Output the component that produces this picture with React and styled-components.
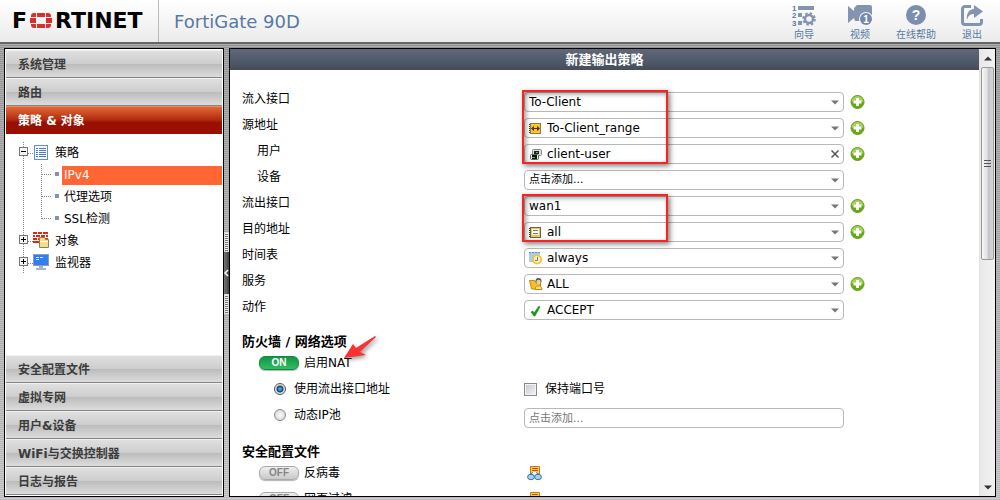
import React, { useState } from "react";
import styled, { createGlobalStyle } from "styled-components";

const GlobalStyle = createGlobalStyle`
  * {
    box-sizing: border-box;
  }

  body {
    margin: 0;
    overflow: hidden;
    font-family: "DejaVu Sans", "Noto Sans CJK SC", sans-serif;
    font-size: 12px;
    line-height: 14px;
    color: #000;
  }

  button, input, select {
    font: inherit;
    color: inherit;
  }
`;

/* ---------- Page ---------- */
const Page = styled.div`
  display: flex;
  flex-direction: column;
  height: 100vh;
  background:
    repeating-linear-gradient(rgba(255, 255, 255, 0.16) 0 1px, rgba(0, 0, 0, 0.06) 1px 2px),
    linear-gradient(#989898, #c6c4c6);
`;

const Header = styled.header`
  display: flex;
  align-items: stretch;
  flex-shrink: 0;
  height: 44px;
  background: linear-gradient(#fff, #ebebeb);
  border-bottom: 2px solid #666;
`;

const Brand = styled.a`
  display: flex;
  align-items: center;
  gap: 3px;
  width: 159px;
  padding-left: 12px;
  border-right: 1px solid #bbb;
  color: #000;
  font-size: 22px;
  font-weight: 700;
  text-decoration: none;
`;

const Product = styled.h1`
  flex: 1;
  margin: 0;
  padding-left: 15px;
  font-size: 18px;
  font-weight: 400;
  line-height: 44px;
  color: #5879a6;
`;

const Tools = styled.nav`
  display: flex;
`;

const ToolButton = styled.button`
  display: flex;
  flex-direction: column;
  align-items: center;
  width: 56px;
  padding: 5px 0 0;
  border: none;
  background: none;
  color: #5879a6;
  font-size: 10px;
  line-height: 12px;
  cursor: pointer;
`;

const Workspace = styled.div`
  display: flex;
  flex: 1;
  min-height: 0;
  padding: 4px 4px 3px;
`;

/* ---------- Sidebar ---------- */
const Sidebar = styled.aside`
  display: flex;
  flex-direction: column;
  flex: 0 0 220px;
  padding: 1px;
  border: 1px solid #000;
  background: #fff;
`;

const MenuItem = styled.button`
  height: 28px;
  flex-shrink: 0;
  padding: 2px 12px 0;
  border: none;
  border-top: 1px solid ${(p) => (p.$active ? "#ee8c60" : "#f0f0f0")};
  border-bottom: 1px solid ${(p) => (p.$active ? "#9a1000" : "#858585")};
  background: ${(p) =>
    p.$active
      ? "linear-gradient(#e2683a, #b02a0c 50%, #980e00 60%, #9a1000)"
      : "linear-gradient(#dfdfdf, #cdcdcd 50%, #bcbcbc 51%, #dcdcdc)"};
  color: ${(p) => (p.$active ? "#fff" : "#3c3c3c")};
  font-weight: 700;
  text-align: left;
  cursor: pointer;
`;

const Tree = styled.ul`
  flex: 1;
  min-height: 0;
  margin: 0;
  padding: 8px 0 0 12px;
  overflow: hidden;
  list-style: none;
`;

const Branch = styled.ul`
  margin: 0 0 0 23px;
  padding: 0;
  list-style: none;
`;

const TreeNode = styled.a`
  display: flex;
  align-items: center;
  height: 22px;
  color: #000;
  text-decoration: none;

  svg {
    flex-shrink: 0;
  }

  span {
    padding-left: 4px;
  }
`;

const Leaf = styled(TreeNode)`
  span {
    flex: 1;
    padding-left: 2px;
    line-height: 19px;
    background: ${(p) => (p.$active ? "#ff6633" : "none")};
    color: ${(p) => (p.$active ? "#fff" : "#000")};
  }
`;

/* ---------- Splitter ---------- */
const Splitter = styled.div`
  display: flex;
  flex-direction: column;
  justify-content: center;
  flex: 0 0 5px;
`;

const Grip = styled.div`
  height: 20px;
  border: 1px solid #ddd;
  background: repeating-linear-gradient(#eee 0 1px, #777 1px 2px);
`;

const Collapse = styled.button`
  display: flex;
  align-items: center;
  height: 42px;
  padding: 0;
  border: none;
  background: linear-gradient(90deg, #777, #444);
  cursor: pointer;
`;

/* ---------- Main ---------- */
const Main = styled.main`
  display: flex;
  flex: 1;
  min-width: 0;
  border: 1px solid #000;
  background: #fff;
`;

const Content = styled.div`
  flex: 1;
  min-width: 0;
  overflow: hidden;
`;

const TitleBar = styled.h2`
  margin: 0;
  background: linear-gradient(#5f697b, #454d5c);
  color: #fff;
  font-size: 13px;
  line-height: 21px;
  text-align: center;
`;

const Form = styled.form`
  padding: 22px 12px 0;
`;

const Fields = styled.div`
  display: grid;
  gap: 6px;
`;

const Row = styled.div`
  display: grid;
  grid-template-columns: 282px 1fr;
  align-items: start;
`;

const Label = styled.label`
  padding-left: ${(p) => (p.$nested ? "15px" : "0")};
`;

const Control = styled.div`
  position: relative;
  display: flex;
  align-items: center;
  gap: 6px;
`;

const Box = styled.div`
  position: relative;
  display: flex;
  align-items: center;
  gap: 4px;
  width: 320px;
  height: 20px;
  padding: 0 4px;
  border: 1px solid #b8b8b8;
  border-radius: 4px;
  background: #fff;

  > svg {
    flex-shrink: 0;
  }
`;

const Select = styled.select`
  flex: 1;
  min-width: 0;
  height: 18px;
  padding: 0;
  border: none;
  outline: none;
  appearance: none;
  background: transparent;
  font-size: ${(p) => (p.$hint ? "11px" : "12px")};
`;

const TextInput = styled.input`
  flex: 1;
  min-width: 0;
  height: 18px;
  padding: 0;
  border: none;
  outline: none;
  background: transparent;

  &::placeholder {
    color: #777;
    font-size: 11px;
  }
`;

const IconButton = styled.button`
  display: flex;
  padding: 0;
  border: none;
  background: none;
  cursor: pointer;
`;

const Callout = styled.div`
  position: absolute;
  z-index: 1;
  top: -2px;
  left: -2px;
  width: 146px;
  height: ${(p) => p.$height};
  border: 2px solid #fa2222;
  box-shadow: 2px 2px 5px rgba(0, 0, 0, 0.5), inset 2px 2px 5px rgba(0, 0, 0, 0.4);
  pointer-events: none;
`;

const SectionTitle = styled.h3`
  margin: 14px 0 0;
  font-size: 13px;
  line-height: 16px;
`;

const Options = styled.div`
  padding-bottom: 2px;
`;

const OptionRow = styled(Row)`
  height: 26px;
  align-items: center;

  ${Box} {
    align-self: end;
  }
`;

const Option = styled.div`
  position: relative;
  display: flex;
  align-items: center;
  gap: ${(p) => (p.$tight ? "5px" : "8px")};
  padding-left: ${(p) => p.$indent || "0"};
`;

const Toggle = styled.button`
  width: 40px;
  height: 14px;
  padding: 0;
  border: 1px solid ${(p) => (p.$on ? "#158a3e" : "#aaa")};
  border-radius: 6px;
  background: ${(p) =>
    p.$on ? "linear-gradient(#159445, #32bd64)" : "linear-gradient(#eee, #c9c9c9)"};
  box-shadow: 0 1px 1px rgba(0, 0, 0, 0.3);
  color: ${(p) => (p.$on ? "#fff" : "#858585")};
  font-family: "Liberation Sans", sans-serif;
  font-size: 10px;
  font-weight: 700;
  line-height: 12px;
  cursor: pointer;
`;

const Radio = styled.input`
  width: 12px;
  height: 12px;
  margin: 0;
  appearance: none;
  border: 1px solid #8a8a8a;
  border-radius: 50%;
  background: radial-gradient(#fff, #ccc);

  &:checked {
    border-color: #555;
    background: radial-gradient(#3aa7dd 0 1px, #123c64 3px, #dfe5ea 4px);
  }
`;

const Checkbox = styled.input`
  width: 13px;
  height: 13px;
  margin: 0;
  appearance: none;
  border: 1px solid #8a8a8a;
  background: linear-gradient(135deg, #c4c8cf, #f4f4f4);
  box-shadow: inset 0 0 0 1px #f4f4f4;

  &:checked {
    background: #3a6ea5;
  }
`;

const Pointer = styled.svg`
  position: absolute;
  top: -22px;
  left: 101px;
  filter: drop-shadow(2px 2px 2px rgba(0, 0, 0, 0.4));
  pointer-events: none;
`;

/* ---------- Scrollbar ---------- */
const ScrollTrack = styled.div`
  display: flex;
  flex-direction: column;
  flex: 0 0 16px;
  padding: 0 1px;
  border-left: 1px solid #e4e4e4;
  background: linear-gradient(90deg, #e8e8e8, #f2f2f2);
`;

const ScrollArrow = styled.button`
  display: flex;
  align-items: center;
  justify-content: center;
  height: 18px;
  padding: 0;
  border: none;
  background: none;
`;

const ScrollRail = styled.div`
  flex: 1;
`;

const ScrollThumb = styled.div`
  display: flex;
  align-items: center;
  justify-content: center;
  height: 47%;
  border: 1px solid #999;
  border-radius: 2px;
  background: linear-gradient(90deg, #f6f6f6, #e3e3e5 45%, #c3c3c9 60%, #d8d8dc);
`;

/* ---------- Icons ---------- */
const LogoMark = () => (
  <svg width="22" height="16" viewBox="0 0 22 16" fill="#da2f2c" aria-hidden="true">
    <path d="M1 4V3a3 3 0 0 1 3-3h2v4zM7 0h8v4H7zM16 0h2a3 3 0 0 1 3 3v1h-5zM0 5h6v5H0zM16 5h6v5h-6zM1 11h5v4H4a3 3 0 0 1-3-3zM7 11h8v4H7zM16 11h5v1a3 3 0 0 1-3 3h-2z" />
  </svg>
);

const WizardIcon = () => (
  <svg width="26" height="24" viewBox="0 0 26 24" fill="#8494b0" aria-hidden="true">
    <g fontFamily="Liberation Sans" fontSize="8" fontWeight="700" fill="#6078a0">
      <text x="1" y="6">1</text>
      <text x="1" y="13">2</text>
      <text x="1" y="21">3</text>
    </g>
    <path d="M7 1h16v4H7zM7 8h4v4H7zM7 16h4v4H7z" />
    <circle cx="18" cy="14" r="4" fill="none" stroke="#8494b0" strokeWidth="2.500" />
    <circle cx="18" cy="14" r="5.800" fill="none" stroke="#8494b0" strokeWidth="2" strokeDasharray="2.400 2.155" />
  </svg>
);

const VideoIcon = () => (
  <svg width="26" height="24" viewBox="0 0 26 24" aria-hidden="true">
    <path d="M1 1l6 5V3l3-3h13a2 2 0 0 1 2 2v10L12 16H8l-1-3-6 5z" fill="#8494b0" />
    <circle cx="19" cy="14" r="7" fill="#f8f8f8" />
    <circle cx="19" cy="14" r="6" fill="#7488aa" />
    <text x="19" y="18" textAnchor="middle" fontFamily="Liberation Sans" fontSize="10" fontWeight="700" fill="#fff">1</text>
  </svg>
);

const HelpIcon = () => (
  <svg width="26" height="24" viewBox="0 0 26 24" aria-hidden="true">
    <circle cx="13" cy="10" r="10" fill="#7d8dac" />
    <text x="13" y="15" textAnchor="middle" fontFamily="Liberation Sans" fontSize="14" fontWeight="700" fill="#fff">?</text>
  </svg>
);

const ExitIcon = () => (
  <svg width="26" height="24" viewBox="0 0 26 24" fill="none" aria-hidden="true">
    <path d="M12 1.500H6A2.500 2.500 0 0 0 3.500 4v13A2.500 2.500 0 0 0 6 19.500h14a2.500 2.500 0 0 0 2.500-2.500v-3" stroke="#8494b0" strokeWidth="3" />
    <path d="M15 0l9 6.500-9 6.500V9c-4 0-6 2-7 6-1-6 2-11 7-11z" fill="#8494b0" />
  </svg>
);

const Expander = ({ open }) => (
  <svg width="15" height="22" viewBox="0 0 15 22" aria-hidden="true">
    <path d="M5.500 0v22M10 11.500h5" stroke="#888" strokeDasharray="1 1" />
    <rect x="1.500" y="5.500" width="8" height="8" fill="#f4f4f4" stroke="#777" />
    <path d={open ? "M3 9.500h5" : "M3 9.500h5M5.500 7v5"} stroke="#000" />
  </svg>
);

/* carries the outer dotted line past the child rows too */
const LeafLines = ({ last }) => (
  <svg width="21" height="22" viewBox="0 0 21 22" overflow="visible" aria-hidden="true">
    <path d="M-17.500 0v22" stroke="#888" strokeDasharray="1 1" />
    <path d={last ? "M.5 0v11M1 10.500h9" : "M.5 0v22M1 10.500h9"} stroke="#888" strokeDasharray="1 1" fill="none" />
    <path d="M14 8h4v4h-4z" fill="#8494b0" />
  </svg>
);

const PolicyIcon = () => (
  <svg width="18" height="18" viewBox="0 0 18 18" aria-hidden="true">
    <rect x="1.500" y="1.500" width="13" height="14" fill="#f4f9ff" stroke="#5f8fd8" />
    <path d="M3 4.500h2M6 4.500h7M3 6.500h2M6 6.500h7M3 8.500h2M6 8.500h7M3 10.500h2M6 10.500h7M3 12.500h2M6 12.500h7" stroke="#4f78c4" />
  </svg>
);

const ObjectIcon = () => (
  <svg width="18" height="18" viewBox="0 0 18 18" aria-hidden="true">
    <path d="M0 0h15v11H0z" fill="#e32414" />
    <path d="M0 2.500h15M0 5.500h15M0 8.500h15M4.500 0v2M9.500 0v2M2.500 3v2M7.500 3v2M12.500 3v2M4.500 6v2" stroke="#fff" />
    <path d="M6.500 5.500h5l1 2h3v8h-9z" fill="#f5df86" stroke="#8f7f50" />
    <path d="M7 9h8v1H7z" fill="#fffbe6" />
  </svg>
);

const MonitorIcon = () => (
  <svg width="18" height="18" viewBox="0 0 18 18" aria-hidden="true">
    <rect x=".5" y=".5" width="15" height="11" fill="#2f7ff0" stroke="#8d9cba" />
    <path d="M3 3.500h3M7 3.500h3M3 5.500h3" stroke="#cfe6ff" />
    <path d="M6 12h4v2h3v2H3v-2h3z" fill="#a9b3c6" />
  </svg>
);

const RangeIcon = () => (
  <svg width="14" height="14" viewBox="0 0 14 14" aria-hidden="true">
    <rect x="1.500" y="2.500" width="10" height="10" fill="#ffc629" stroke="#8a7a50" />
    <path d="M.5 3v10" stroke="#333" strokeDasharray="1 1" />
    <path d="M2 7.500l3-2.500v2h3V5l3 2.500L8 10V8H5v2z" fill="#4b3512" />
  </svg>
);

const UserIcon = () => (
  <svg width="14" height="14" viewBox="0 0 14 14" aria-hidden="true">
    <rect x="3.500" y="2.500" width="9" height="6" rx="1" fill="#ddd" stroke="#888" />
    <path d="M5 4h5v3H5z" fill="#222" />
    <rect x="1.500" y="7.500" width="8" height="5" rx="1" fill="#eee" stroke="#666" />
    <path d="M3 8h5v4H3z" fill="#111" />
    <path d="M3 10.500h3M7 5.500h2" stroke="#35d435" />
  </svg>
);

const AddressIcon = () => (
  <svg width="14" height="14" viewBox="0 0 14 14" aria-hidden="true">
    <rect x="1.500" y="2.500" width="10" height="10" fill="#e9c65a" stroke="#6f6444" />
    <path d="M.5 3v10" stroke="#333" strokeDasharray="1 1" />
    <path d="M3 4h7v6H3z" fill="#fffbea" />
    <path d="M4 5.500h5M4 8.500h5" stroke="#777" />
  </svg>
);

const ScheduleIcon = () => (
  <svg width="14" height="14" viewBox="0 0 14 14" aria-hidden="true">
    <path d="M0 1h11v10H0z" fill="#a9cdee" />
    <path d="M0 1.500h11" stroke="#5b8fbf" strokeDasharray="2 1" />
    <circle cx="8" cy="8.500" r="5" fill="#fbc02e" />
    <circle cx="8" cy="8.500" r="3.200" fill="#fff3cc" />
    <path d="M8.500 6v3.500H6" stroke="#777" fill="none" />
  </svg>
);

const ServiceIcon = () => (
  <svg width="14" height="14" viewBox="0 0 14 14" aria-hidden="true">
    <path d="M.5 3.500h5l1 1.500h5v7h-9z" fill="#f6bd2e" stroke="#c58a10" />
    <circle cx="9.500" cy="4" r="3" fill="#555" />
    <circle cx="9.500" cy="5" r="2.200" fill="#f3cf9a" />
    <path d="M6 12.500c0-5 7-5 7 0z" fill="#ffe07a" stroke="#c58a10" />
  </svg>
);

const AcceptIcon = () => (
  <svg width="14" height="14" viewBox="0 0 14 14" aria-hidden="true">
    <path d="M2 9l2-1 1 2 5-7 1 1-5 9H5z" fill="#169a16" stroke="#0d800d" strokeWidth=".5" />
  </svg>
);

const PlusIcon = () => (
  <svg width="15" height="15" viewBox="0 0 15 15" aria-hidden="true">
    <circle cx="7.500" cy="7" r="6.500" fill="#68ab10" stroke="#5f9d18" />
    <path d="M1.500 7a6 6 0 0 1 12 0c-4-2-8-2-12 0z" fill="#a3d356" />
    <path d="M7.500 3v8M3.500 7h8" stroke="#fff" strokeWidth="3" />
  </svg>
);

const Arrow = ({ up, color = "#777" }) => (
  <svg width="8" height="5" viewBox="0 0 8 5" aria-hidden="true">
    <path d={up ? "M0 4.500l4-4 4 4z" : "M0 .5h8l-4 4z"} fill={color} />
  </svg>
);

const CrossIcon = () => (
  <svg width="8" height="8" viewBox="0 0 8 8" aria-hidden="true">
    <path d="M.5.5l7 7M7.500.5l-7 7" stroke="#555" strokeWidth="1.500" />
  </svg>
);

const ViewIcon = () => (
  <svg width="15" height="15" viewBox="0 0 15 15" aria-hidden="true">
    <path d="M3.500.5h9v8h-9z" fill="#ffc95a" stroke="#c67a14" />
    <path d="M5 2.500h6M5 4.500h6" stroke="#b3521a" />
    <path d="M5 7l2-1h2l2 1 2 2H2z" fill="#fff" />
    <path d="M2 9l4-2.500M13 9L9 6.500" stroke="#3a70a8" />
    <ellipse cx="4" cy="11" rx="3.400" ry="2.700" fill="#a8d2f2" stroke="#3a70a8" />
    <ellipse cx="11" cy="11" rx="3.400" ry="2.700" fill="#a8d2f2" stroke="#3a70a8" />
  </svg>
);

const tools = [
  { label: "向导", icon: WizardIcon },
  { label: "视频", icon: VideoIcon },
  { label: "在线帮助", icon: HelpIcon },
  { label: "退出", icon: ExitIcon },
];

const topMenu = ["系统管理", "路由", "策略 & 对象"];
const bottomMenu = ["安全配置文件", "虚拟专网", "用户&设备", "WiFi与交换控制器", "日志与报告"];
const policyPages = ["IPv4", "代理选项", "SSL检测"];

const fields = [
  { id: "srcintf", label: "流入接口", value: "To-Client", add: true, callout: "74px" },
  { id: "srcaddr", label: "源地址", value: "To-Client_range", icon: RangeIcon, add: true },
  { id: "users", label: "用户", value: "client-user", icon: UserIcon, add: true, nested: true, clearable: true },
  { id: "devices", label: "设备", value: "点击添加...", nested: true, hint: true },
  { id: "dstintf", label: "流出接口", value: "wan1", add: true, callout: "48px" },
  { id: "dstaddr", label: "目的地址", value: "all", icon: AddressIcon, add: true },
  { id: "schedule", label: "时间表", value: "always", icon: ScheduleIcon },
  { id: "service", label: "服务", value: "ALL", icon: ServiceIcon, add: true },
  { id: "action", label: "动作", value: "ACCEPT", icon: AcceptIcon },
];

const profiles = ["反病毒", "网页过滤"];

function Field({ field }) {
  const [text, setText] = useState(field.value);
  const Icon = field.icon;

  return (
    <Row>
      <Label htmlFor={field.id} $nested={field.nested}>
        {field.label}
      </Label>
      <Control>
        <Box>
          {Icon && <Icon />}
          {field.clearable ? (
            <>
              <TextInput id={field.id} value={text} onChange={(e) => setText(e.target.value)} />
              <IconButton type="button" aria-label="清除" onClick={() => setText("")}>
                <CrossIcon />
              </IconButton>
            </>
          ) : (
            <>
              <Select id={field.id} $hint={field.hint}>
                <option>{field.value}</option>
              </Select>
              <Arrow />
            </>
          )}
        </Box>
        {field.add && (
          <IconButton type="button" aria-label="添加">
            <PlusIcon />
          </IconButton>
        )}
        {field.callout && <Callout $height={field.callout} />}
      </Control>
    </Row>
  );
}

function ProfileRow({ name }) {
  const [on, setOn] = useState(false);

  return (
    <OptionRow>
      <Option $indent="17px" $tight>
        <Toggle type="button" role="switch" aria-checked={on} aria-label={name} $on={on} onClick={() => setOn(!on)}>
          {on ? "ON" : "OFF"}
        </Toggle>
        <span>{name}</span>
      </Option>
      <Option $indent="3px">
        <ViewIcon />
      </Option>
    </OptionRow>
  );
}

export default function App() {
  const [nat, setNat] = useState(true);
  const [pool, setPool] = useState("interface");

  return (
    <Page>
      <GlobalStyle />
      <Header>
        <Brand href="#" aria-label="Fortinet">
          <span>F</span>
          <LogoMark />
          <span>RTINET</span>
        </Brand>
        <Product>FortiGate 90D</Product>
        <Tools>
          {tools.map(({ label, icon: Icon }) => (
            <ToolButton key={label} type="button">
              <Icon />
              {label}
            </ToolButton>
          ))}
        </Tools>
      </Header>

      <Workspace>
        <Sidebar>
          {topMenu.map((name) => (
            <MenuItem key={name} type="button" $active={name === "策略 & 对象"}>
              {name}
            </MenuItem>
          ))}
          <Tree>
            <li>
              <TreeNode href="#">
                <Expander open />
                <PolicyIcon />
                <span>策略</span>
              </TreeNode>
              <Branch>
                {policyPages.map((name, i) => (
                  <li key={name}>
                    <Leaf href="#" $active={i === 0}>
                      <LeafLines last={i === policyPages.length - 1} />
                      <span>{name}</span>
                    </Leaf>
                  </li>
                ))}
              </Branch>
            </li>
            <li>
              <TreeNode href="#">
                <Expander />
                <ObjectIcon />
                <span>对象</span>
              </TreeNode>
            </li>
            <li>
              <TreeNode href="#">
                <Expander />
                <MonitorIcon />
                <span>监视器</span>
              </TreeNode>
            </li>
          </Tree>
          {bottomMenu.map((name) => (
            <MenuItem key={name} type="button">
              {name}
            </MenuItem>
          ))}
        </Sidebar>

        <Splitter>
          <Grip />
          <Collapse type="button" aria-label="收起">
            <svg width="5" height="8" viewBox="0 0 5 8" aria-hidden="true">
              <path d="M4 1L1 4l3 3" stroke="#fff" strokeWidth="1.500" fill="none" />
            </svg>
          </Collapse>
          <Grip />
        </Splitter>

        <Main>
          <Content>
            <TitleBar>新建输出策略</TitleBar>
            <Form onSubmit={(e) => e.preventDefault()}>
              <Fields>
                {fields.map((field) => (
                  <Field key={field.id} field={field} />
                ))}
              </Fields>

              <SectionTitle>防火墙 / 网络选项</SectionTitle>
              <Options>
                <OptionRow>
                  <Option $indent="17px" $tight>
                    <Toggle type="button" role="switch" aria-checked={nat} aria-labelledby="nat-label" $on={nat} onClick={() => setNat(!nat)}>
                      {nat ? "ON" : "OFF"}
                    </Toggle>
                    <span id="nat-label">启用NAT</span>
                    <Pointer width="36" height="26" viewBox="0 0 36 26" aria-hidden="true">
                      <path d="M1 24L10 10l3 4L32 2l1 1-16 15 6 3z" fill="#fa3232" />
                    </Pointer>
                  </Option>
                </OptionRow>
                <OptionRow>
                  <Option $indent="32px">
                    <Radio type="radio" name="pool" id="pool-interface" checked={pool === "interface"} onChange={() => setPool("interface")} />
                    <label htmlFor="pool-interface">使用流出接口地址</label>
                  </Option>
                  <Option>
                    <Checkbox type="checkbox" id="keep-port" />
                    <label htmlFor="keep-port">保持端口号</label>
                  </Option>
                </OptionRow>
                <OptionRow>
                  <Option $indent="32px">
                    <Radio type="radio" name="pool" id="pool-dynamic" checked={pool === "dynamic"} onChange={() => setPool("dynamic")} />
                    <label htmlFor="pool-dynamic">动态IP池</label>
                  </Option>
                  <Box>
                    <TextInput aria-label="动态IP池" placeholder="点击添加..." />
                  </Box>
                </OptionRow>
              </Options>

              <SectionTitle>安全配置文件</SectionTitle>
              <Options>
                {profiles.map((name) => (
                  <ProfileRow key={name} name={name} />
                ))}
              </Options>
            </Form>
          </Content>
          <ScrollTrack>
            <ScrollArrow type="button" aria-label="向上滚动">
              <Arrow up color="#333" />
            </ScrollArrow>
            <ScrollRail>
              <ScrollThumb>
                <svg width="7" height="8" viewBox="0 0 7 8" aria-hidden="true">
                  <path d="M0 .5h7M0 3.500h7M0 6.500h7" stroke="#555" />
                </svg>
              </ScrollThumb>
            </ScrollRail>
            <ScrollArrow type="button" aria-label="向下滚动">
              <Arrow color="#333" />
            </ScrollArrow>
          </ScrollTrack>
        </Main>
      </Workspace>
    </Page>
  );
}
